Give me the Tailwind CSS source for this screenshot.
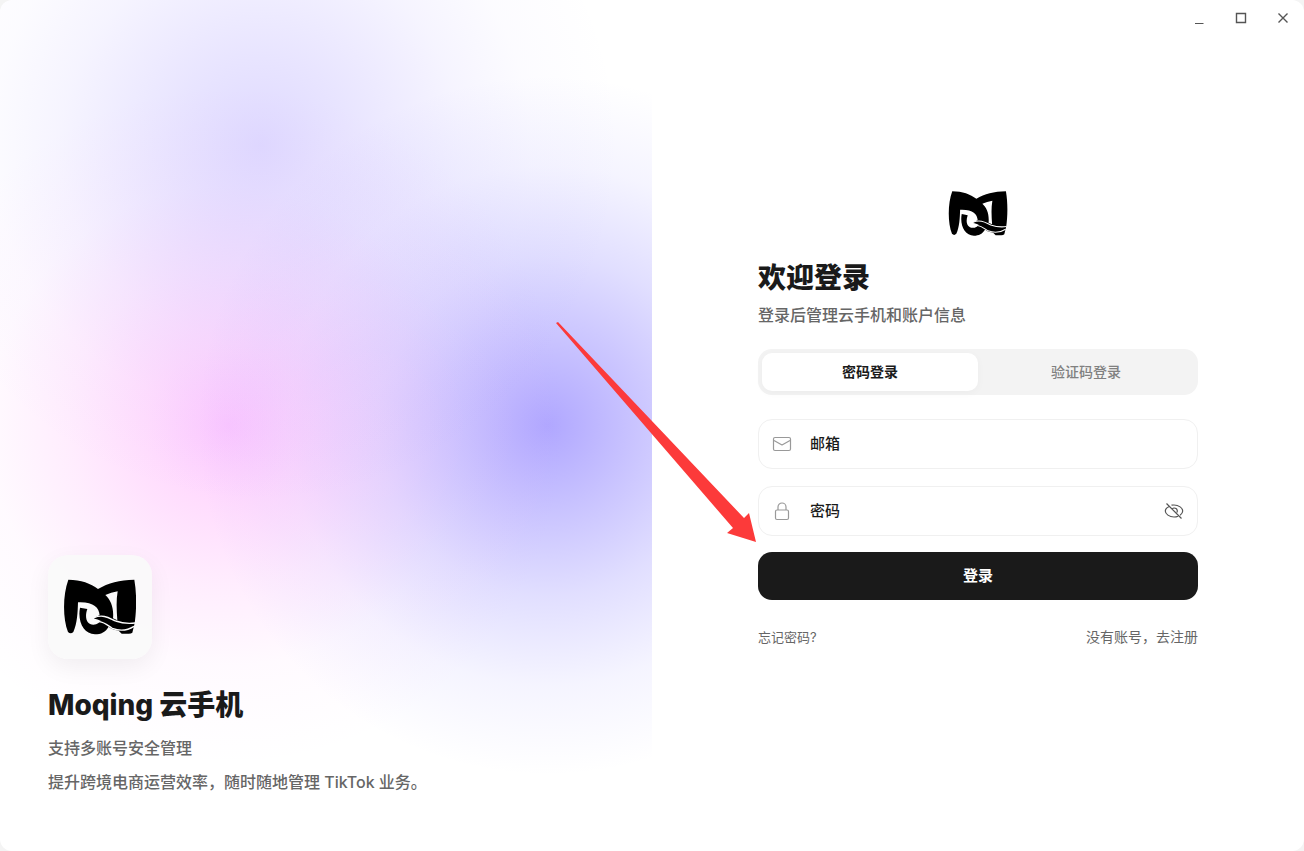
<!DOCTYPE html>
<html lang="zh-CN">
<head>
<meta charset="utf-8">
<meta name="viewport" content="width=device-width, initial-scale=1">
<title>Moqing 云手机</title>
<script src="https://cdn.jsdelivr.net/npm/@tailwindcss/browser@4"></script>
</head>
<body class="bg-[#f4f4f4] font-['Inter','Noto_Sans_CJK_SC',sans-serif]">
<svg class="hidden" aria-hidden="true">
  <symbol id="logo" viewBox="102 118 216 166">
    <path fill="#000" d="M115 119C153 119 182 130 204 147C235 128 268 120 313 119C321 165 319 215 314 250L307 278Q302 282 293 281L275 281L266 272C245 268 241 264 236 260C227 276 213 283 195 283C161 283 142 244 150 203L172 207C163 233 170 253 190 254C203 254 207 247 213 243C207 239 199 237 192 236C198 230 203 228 209 226C207 202 190 185 144 187C143 217 142 250 130 276Q122 284 114 276C98 235 98 165 115 119ZM226 165C243 180 252 205 249 235L262 241C260 213 258 183 263 154Q243 157 226 165Z"/>
    <path fill="none" stroke="#fcfcfc" stroke-width="4" d="M192 233C221 221 240 236 257 243C276 250 295 252 316 249M208 245C225 247 235 258 247 265C268 273 293 271 312 259"/>
  </symbol>
</svg>
<main class="relative grid min-h-screen grid-cols-2 overflow-hidden rounded-xl bg-white">
  <section class="flex flex-col justify-end bg-[radial-gradient(circle_at_40%_17%,#7c66ff40_0,#7c66ff2c_90px,#7c66ff12_200px,#7c66ff06_270px,#7c66ff00_360px),radial-gradient(circle_at_35%_50%,#f66eff60_0,#ff76f840_80px,#ff80f624_160px,#ff80f60a_240px,#ff80f600_340px),radial-gradient(circle_at_84%_50%,#6250ff80_0,#6656ff58_90px,#6c60ff34_170px,#7068ff12_260px,#7070ff00_350px)] px-12 pb-13">
    <div class="flex size-26 items-center justify-center rounded-[20px] bg-[#fafafa]/90 shadow-[0_8px_24px_rgba(0,0,0,0.06)]">
      <svg class="h-14 w-18" role="img" aria-label="Moqing"><use href="#logo"/></svg>
    </div>
    <h1 class="mt-[26px] text-[28px]/10 font-extrabold text-[#1a1a1a]">Moqing 云手机</h1>
    <div class="mt-1.5 text-base/[34px] font-medium text-[#666]">
      <p>支持多账号安全管理</p>
      <p>提升跨境电商运营效率，随时随地管理 TikTok 业务。</p>
    </div>
  </section>
  <section class="flex flex-col items-center justify-center px-6 pb-3.5">
    <form class="flex w-full max-w-[440px] flex-col">
      <svg class="mx-auto h-[45px] w-[60px]" role="img" aria-label="Moqing"><use href="#logo"/></svg>
      <h2 class="mt-[22px] text-[28px]/10 font-extrabold text-[#1a1a1a]">欢迎登录</h2>
      <p class="mt-[5px] text-base/6 font-medium text-[#666]">登录后管理云手机和账户信息</p>
      <div class="mt-[22px] grid grid-cols-2 rounded-[14px] bg-[#f3f3f3] p-1 text-sm">
        <button type="button" class="h-[38px] rounded-[10px] bg-white font-bold text-[#1a1a1a] shadow-[0_2px_8px_rgba(0,0,0,0.03)]">密码登录</button>
        <button type="button" class="h-[38px] font-medium text-[#808080]">验证码登录</button>
      </div>
      <label class="mt-6 flex h-[50px] items-center rounded-[14px] border border-[#f0f0f0] px-[13px]">
        <svg class="size-5" viewBox="0 0 20 20" fill="none" stroke="#999" stroke-width="1.2" stroke-linejoin="round" aria-hidden="true"><rect x="1.5" y="3.5" width="17" height="13" rx="1.5"/><path d="M2 6.5L10 11L18 6.5"/></svg>
        <input type="email" aria-label="邮箱" placeholder="邮箱" class="ml-[18px] min-w-0 flex-1 pt-0.5 text-[15px] font-medium outline-none placeholder:text-[#1a1a1a]">
      </label>
      <div class="mt-[17px] flex h-[50px] items-center rounded-[14px] border border-[#f0f0f0] px-[13px]">
        <svg class="size-5" viewBox="0 0 20 20" fill="none" stroke="#999" stroke-width="1.2" aria-hidden="true"><rect x="3.5" y="9" width="13" height="9.5" rx="1.5"/><path d="M6 9V6a4 4 0 0 1 8 0v3"/></svg>
        <input type="password" aria-label="密码" placeholder="密码" class="ml-[18px] min-w-0 flex-1 pt-0.5 text-[15px] font-medium outline-none placeholder:text-[#1a1a1a]">
        <button type="button" aria-label="显示密码"><svg class="size-5" viewBox="0 0 20 20" fill="none" stroke="#555" stroke-width="1.2"><path d="M5.5 5.2C3 6.4 1.3 8.3 1.3 10c0 3 4 6 8.7 6 1.5 0 2.9-.3 4.1-.8M7.5 4.2C8.3 4 9.1 4 10 4c4.7 0 8.7 3 8.7 6 0 1.5-1 3-2.6 4.2M2.500 2.500L17.500 17.500M8 8.300a2.800 2.800 0 0 1 4.800 3.200"/></svg></button>
      </div>
      <button type="submit" class="mt-4 h-12 rounded-[14px] bg-[#1a1a1a] pt-0.5 text-[15px] font-bold text-white">登录</button>
      <div class="mt-[27px] flex justify-between text-sm text-[#666]">
        <a href="#" class="text-[13px]/5">忘记密码?</a>
        <a href="#">没有账号，去注册</a>
      </div>
    </form>
  </section>
  <nav class="absolute top-2 right-[11px] flex gap-[22px]" aria-label="窗口">
    <button type="button" aria-label="最小化"><svg class="size-5" viewBox="0 0 20 20"><path d="M6 15.500h8.500" stroke="#555" stroke-width="1"/></svg></button>
    <button type="button" aria-label="最大化"><svg class="size-5" viewBox="0 0 20 20"><path d="M5.500 5.500h9v9h-9z" fill="none" stroke="#555" stroke-width="1.400"/></svg></button>
    <button type="button" aria-label="关闭"><svg class="size-5" viewBox="0 0 20 20"><path d="M5.500 5.500l9 9m0-9l-9 9" stroke="#555" stroke-width="1.400"/></svg></button>
  </nav>
  <svg class="pointer-events-none absolute top-[322px] left-[556px] h-[221px] w-[201px]" viewBox="0 0 201 221" aria-hidden="true"><path fill="#fc3a3a" d="M0 1L2 0L188 196L193 191L200 220L171 211L177 206Z"/></svg>
</main>
</body>
</html>
